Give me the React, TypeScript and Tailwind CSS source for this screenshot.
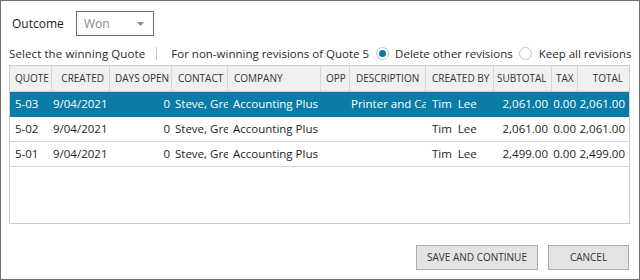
import React from "react";

const cols = [
  { label: "QUOTE", w: "w-[42px]", h: "justify-start pl-[5px]", d: "justify-start pl-[5px]" },
  { label: "CREATED", w: "w-[58px]", h: "justify-end pr-[5px]", d: "justify-start pl-[1px]" },
  { label: "DAYS OPEN", w: "w-[62px]", h: "justify-start pl-[5px]", d: "justify-end pr-[2px]" },
  { label: "CONTACT", w: "w-[56px]", h: "justify-start pl-[6px]", d: "justify-start pl-[3px]" },
  { label: "COMPANY", w: "w-[93px]", h: "justify-start pl-[6px]", d: "justify-start pl-[5px]" },
  { label: "OPP", w: "w-[29px]", h: "justify-start pl-[5px]", d: "justify-start pl-[5px]" },
  { label: "DESCRIPTION", w: "w-[76px]", h: "justify-start pl-[6px]", d: "justify-start pl-[1px]" },
  { label: "CREATED BY", w: "w-[68px]", h: "justify-start pl-[6px]", d: "justify-start pl-[6px]" },
  { label: "SUBTOTAL", w: "w-[58px]", h: "justify-start pl-[3px]", d: "justify-end pr-[4px]" },
  { label: "TAX", w: "w-[26px]", h: "justify-start pl-[4px]", d: "justify-end pr-[2px]" },
  { label: "TOTAL", w: "w-[52px]", h: "justify-end pr-[7px]", d: "justify-end pr-[5px]" },
];

const rows = [
  ["5-03", "9/04/2021", "0", "Steve, Greg", "Accounting Plus", "", "Printer and Cartridges", "Tim\u00a0\u00a0Lee", "2,061.00", "0.00", "2,061.00"],
  ["5-02", "9/04/2021", "0", "Steve, Greg", "Accounting Plus", "", "", "Tim\u00a0\u00a0Lee", "2,061.00", "0.00", "2,061.00"],
  ["5-01", "9/04/2021", "0", "Steve, Greg", "Accounting Plus", "", "", "Tim\u00a0\u00a0Lee", "2,499.00", "0.00", "2,499.00"],
];

export default function App() {
  return (
    <div
      className="w-[640px] h-[280px] bg-white border border-[#6f6f6f] flex flex-col pl-[8px] pr-[9px] pt-[10px] text-[#1e1e1e]"
      style={{ fontFamily: "'Open Sans', 'Noto Sans', sans-serif" }}
    >
      <div className="flex items-center h-[25px]">
        <span className="ml-[3px] w-[64px] text-[12px] text-[#1a1a1a]">Outcome</span>
        <div className="w-[78px] h-[25px] border border-[#6a6a6a] flex items-center justify-between pl-[7px] pr-[9px]">
          <span className="text-[12px] text-[#8a8a8a]">Won</span>
          <svg width="7" height="4" viewBox="0 0 7 4">
            <path d="M0 0 L7 0 L3.5 4 Z" fill="#8a8a8a" />
          </svg>
        </div>
      </div>

      <div className="flex items-center h-[19px] mt-[8px] text-[11.5px] whitespace-nowrap">
        <span className="text-[#2a2a2a] tracking-[0.1px]">Select the winning Quote</span>
        <span className="w-px h-[13px] bg-[#c9c9c9] ml-[11px] mr-[14px] shrink-0" />
        <span className="text-[#2a2a2a]">For non-winning revisions of Quote 5</span>
        <span className="ml-[7px] w-[13px] h-[13px] shrink-0 rounded-full border border-[#c2c2c2] bg-white flex items-center justify-center">
          <span className="w-[7px] h-[7px] rounded-full bg-[#0d78a3]" />
        </span>
        <span className="ml-[6px] text-[#2a2a2a]">Delete other revisions</span>
        <span className="ml-[6px] w-[13px] h-[13px] shrink-0 rounded-full border border-[#c2c2c2] bg-white" />
        <span className="ml-[7px] text-[#2a2a2a]">Keep all revisions</span>
      </div>

      <div className="mt-[2px] w-[621px] h-[159px] border border-[#cdcdcd] flex flex-col overflow-hidden">
        <div className="flex h-[26px] bg-[#f0f0f0] border-b border-[#d2d2d2] shrink-0">
          {cols.map((c, i) => (
            <div
              key={c.label}
              className={`${c.w} ${c.h} shrink-0 flex items-center text-[10px] text-[#333] whitespace-nowrap overflow-hidden ${i < cols.length - 1 ? "border-r border-[#d6d6d6]" : ""}`}
            >
              {c.label}
            </div>
          ))}
        </div>
        {rows.map((r, ri) => (
          <div
            key={ri}
            className={`flex h-[25px] shrink-0 border-b ${ri === 0 ? "bg-[#0a7ca7] text-white border-[#0a7ca7]" : "bg-white text-[#1e1e1e] border-[#d4d4d4]"}`}
          >
            {cols.map((c, ci) => (
              <div
                key={ci}
                className={`${c.w} ${c.d} shrink-0 flex items-center text-[11.5px] whitespace-nowrap overflow-hidden`}
              >
                {r[ci]}
              </div>
            ))}
          </div>
        ))}
      </div>

      <div className="flex justify-end gap-[10px] mt-[21px] w-[620px]">
        <button className="w-[122px] h-[25px] bg-[#e3e3e3] border border-[#adadad] text-[10px] text-[#333]">
          SAVE AND CONTINUE
        </button>
        <button className="w-[81px] h-[25px] bg-[#e3e3e3] border border-[#adadad] text-[10px] text-[#333]">
          CANCEL
        </button>
      </div>
    </div>
  );
}
